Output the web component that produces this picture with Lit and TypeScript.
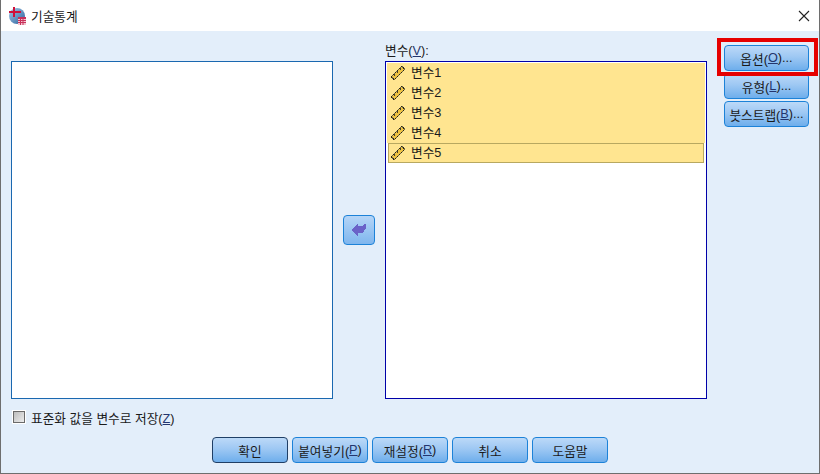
import { LitElement, html, css, svg } from "lit";
import { customElement } from "lit/decorators.js";

const rulerPixels = () => {
  const out = [];
  for (let y = 0; y < 16; y++) {
    for (let x = 0; x < 16; x++) {
      const d = x + y - 15;
      const along = x - y;
      if (Math.abs(d) > 3 || Math.abs(along) > 11) continue;
      const edge = Math.abs(d) === 3 || Math.abs(along) >= 10;
      const tick = (d === -2 || d === -1) && (along + 60) % 6 <= 1;
      const fill = edge ? (x % 2 ? "#26241a" : "#6f6842") : tick ? "#4a4326" : "#efc240";
      out.push(svg`<rect x=${x} y=${y} width="1" height="1" fill=${fill}></rect>`);
    }
  }
  return out;
};

const ruler = html`<svg class="ruler" width="16" height="16" viewBox="0 0 16 16" shape-rendering="crispEdges">${rulerPixels()}</svg>`;

const logo = html`<svg class="logo" width="20" height="20" viewBox="0 0 20 20">
  <defs><linearGradient id="g" x1="0" y1="0" x2="1" y2="1"><stop offset="0" stop-color="#a5cbe8"/><stop offset="1" stop-color="#2a5f9c"/></linearGradient></defs>
  <circle cx="9" cy="10" r="8" fill="url(#g)"/>
  <path d="M5 1h2v4h6v2H7v4H5V7H1V5h4z" fill="#d0103a"/>
  <rect x="10" y="11" width="8" height="8" fill="#f3c4cf"/>
  ${svg`<path d="M10 14.500h8M10 16.500h8M12.500 13v6M15 13v6" stroke="#c8305a" stroke-width="1"/>`}
  <rect x="10" y="11" width="8" height="2" fill="#c8305a"/>
</svg>`;

@customElement("app-root")
export class AppRoot extends LitElement {
  static styles = css`
    :host {
      display: block;
      width: 820px;
      height: 474px;
      font-family: "Liberation Sans", "Noto Sans CJK KR", sans-serif;
      font-size: 12.7px;
      color: #1a1a1a;
    }
    * { box-sizing: border-box; }
    .window {
      width: 820px;
      height: 474px;
      display: flex;
      flex-direction: column;
      border: 1px solid #6e6e6e;
      border-top: none;
      background: #e3eefa;
    }
    .title {
      height: 31px;
      flex: none;
      background: #fff;
      display: flex;
      align-items: center;
      padding: 0 9px 0 7px;
      gap: 3px;
    }
    .title .name { flex: 1; }
    .main {
      flex: 1;
      display: grid;
      grid-template-columns: 322px 32px 322px 85px;
      grid-template-rows: 30px 338px 1fr;
      column-gap: 10px;
      padding: 0 0 0 10px;
      position: relative;
    }
    .label-v { grid-column: 3; grid-row: 1; align-self: end; padding-bottom: 3px; line-height: 14px; }
    .list {
      grid-row: 2;
      background: #fff;
      border: 1px solid #1a68b0;
    }
    .list.left { grid-column: 1; }
    .list.right {
      grid-column: 3;
      border-color: #0000a8;
      padding: 1px 1px 2px 1px;
      display: flex;
      flex-direction: column;
    }
    .btn {
      display: flex;
      align-items: center;
      justify-content: center;
      height: 26px;
      border: 1px solid #1c82d8;
      border-radius: 4px;
      background: linear-gradient(#bcd9f8, #9ec8f3 45%, #6eaeec);
      white-space: nowrap;
    }
    .btn.move {
      grid-column: 2;
      grid-row: 2;
      align-self: start;
      margin-top: 154px;
      height: 30px;
      background: linear-gradient(#b5d5f7, #7fb6ee);
    }
    .item {
      height: 20px;
      display: flex;
      align-items: center;
      gap: 5px;
      background: #ffe590;
      padding-left: 3px;
      line-height: 20px;
    }
    .item.cur {
      height: 20px;
      margin: 0 1px 0 1px;
      padding-left: 1px;
      border: 1px solid #b8a860;
    }
    .item .ruler { flex: none; }
    .side {
      grid-column: 4;
      grid-row: 1 / span 2;
      margin-left: 7px;
      margin-top: 14px;
      display: flex;
      flex-direction: column;
      gap: 2px;
      width: 85px;
    }
    .side .btn { width: 85px; }
    .foot {
      grid-column: 1 / -1;
      grid-row: 3;
      display: flex;
      flex-direction: column;
    }
    .check {
      margin-top: 11px;
      height: 14px;
      display: flex;
      align-items: center;
      gap: 6px;
      margin-left: 2px;
    }
    .box {
      width: 12px;
      height: 12px;
      border: 1px solid #6a6a6a;
      background: linear-gradient(135deg, #bdbdbd, #ececec);
      box-shadow: 0 0 0 1px #fff;
    }
    .actions {
      margin-top: 13px;
      margin-left: 201px;
      display: flex;
      gap: 4px;
    }
    .actions .btn { width: 76px; }
    .btn.default { border-color: #1f3f66; }
    .hl {
      position: absolute;
      left: 716px;
      top: 7px;
      width: 101px;
      height: 38px;
      border: 4px solid #e60000;
      pointer-events: none;
    }
    u { text-underline-offset: 1px; color: #23356e; }
  `;

  render() {
    return html`
      <div class="window">
        <div class="title">
          ${logo}
          <span class="name">기술통계</span>
          <svg width="12" height="12" viewBox="0 0 12 12"><path d="M1 1L11 11M11 1L1 11" stroke="#222" stroke-width="1.100" fill="none"/></svg>
        </div>
        <div class="main">
          <div class="list left"></div>
          <div class="btn move">
            <svg width="15" height="14" viewBox="0 0 15 14" shape-rendering="crispEdges">
              <path d="M0 7 L6 0 V3 H10 L12 1 H14 V5 L11 10 H6 V14 Z" fill="#6a62c8"/>
            </svg>
          </div>
          <div class="label-v">변수(<u>V</u>):</div>
          <div class="list right">
            ${["변수1", "변수2", "변수3", "변수4"].map((v) => html`<div class="item">${ruler}<span>${v}</span></div>`)}
            <div class="item cur">${ruler}<span>변수5</span></div>
          </div>
          <div class="side">
            <div class="btn">옵션(<u>O</u>)...</div>
            <div class="btn">유형(<u>L</u>)...</div>
            <div class="btn">붓스트랩(<u>B</u>)...</div>
          </div>
          <div class="foot">
            <div class="check"><span class="box"></span><span>표준화 값을 변수로 저장(<u>Z</u>)</span></div>
            <div class="actions">
              <div class="btn default">확인</div>
              <div class="btn">붙여넣기(<u>P</u>)</div>
              <div class="btn">재설정(<u>R</u>)</div>
              <div class="btn">취소</div>
              <div class="btn">도움말</div>
            </div>
          </div>
          <div class="hl"></div>
        </div>
      </div>
    `;
  }
}
